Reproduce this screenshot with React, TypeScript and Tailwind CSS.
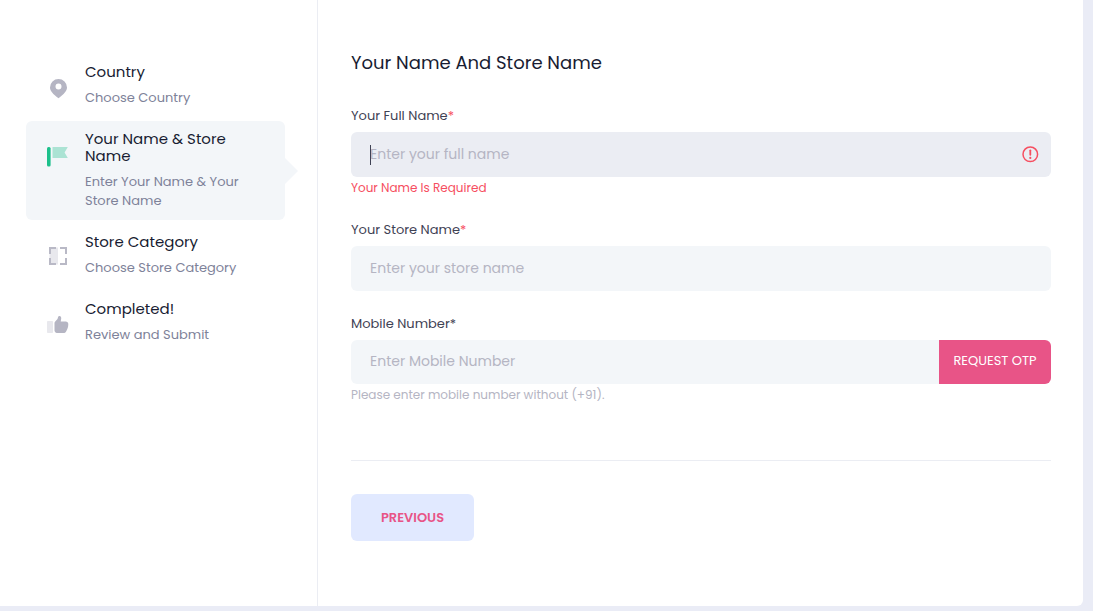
import React from 'react';
import { clsx } from 'clsx';

const PinIcon = () => (
  <svg viewBox="0 0 24 24" className="w-6 h-6 shrink-0" aria-hidden="true">
    <path
      fill="#b5b5c3"
      fillRule="evenodd"
      d="M12.5 22.2C7 18 4 14.800 4 11.400a8.500 8.500 0 0 1 17 0c0 3.400-3 6.600-8.500 10.800zM12.500 13.500a3 3 0 1 0 0-6 3 3 0 0 0 0 6z"
    />
  </svg>
);

const FlagIcon = () => (
  <svg viewBox="0 0 24 24" className="w-6 h-6 shrink-0" aria-hidden="true">
    <rect x="1" y="4" width="3.6" height="19.5" rx="1.5" fill="#1bc08b" />
    <path d="M6.500 4H21.800l-3.200 5.500 3.200 5.500H6.500z" fill="#abe3d4" />
  </svg>
);

const FrameIcon = () => (
  <svg viewBox="0 0 24 24" className="w-6 h-6 shrink-0" aria-hidden="true">
    <rect x="3.500" y="1.500" width="8.500" height="17" fill="#e8e8ed" />
    <path
      fill="none"
      stroke="#b9b9c6"
      strokeWidth="2"
      d="M4 8V2h6M14 2h6v6M20 12v6h-6M10 18H4v-6"
    />
  </svg>
);

const ThumbIcon = () => (
  <svg viewBox="0 0 24 24" className="w-6 h-6 shrink-0" aria-hidden="true">
    <rect x="1" y="8" width="6" height="12" rx="0.8" fill="#e8e8ed" />
    <path
      fill="#b5b5c3"
      d="M8.500 10c0-.6.3-1 .7-1.400L11.500 6l.6-2c.3-.7.8-1.100 1.500-.9 1.300.3 1.800 1.300 1.600 2.700L14.700 8.500h5c1.500 0 2.600 1.100 2.600 2.600 0 3-.8 5.300-2.200 7.400-.6.9-1.500 1.600-2.600 1.600h-5.500c-2 0-3.500-1-3.500-2.600z"
    />
  </svg>
);

const steps = [
  { title: 'Country', desc: 'Choose Country', icon: PinIcon },
  { title: 'Your Name & Store Name', desc: 'Enter Your Name & Your Store Name', icon: FlagIcon },
  { title: 'Store Category', desc: 'Choose Store Category', icon: FrameIcon },
  { title: 'Completed!', desc: 'Review and Submit', icon: ThumbIcon },
];

const Sidebar = ({ current }: { current: number }) => (
  <aside className="w-[318px] shrink-0 border-r border-[#ebedf3] pt-[54px] pl-[26px] pr-8">
    <ol className="flex flex-col gap-1">
      {steps.map(({ title, desc, icon: Icon }, i) => (
        <li
          key={title}
          aria-current={i === current ? 'step' : undefined}
          className={clsx(
            'relative flex gap-[15px] rounded-md pt-[9px] pb-2.5 pl-5 pr-8',
            i === current && 'bg-[#f3f6f9]'
          )}
        >
          <div className="pt-[13px]">
            <Icon />
          </div>
          <div>
            <h3 className="text-[15px] leading-[17px] text-[#181c32] mb-2">{title}</h3>
            <p className="text-[13px] leading-[19px] text-[#7e8299]">{desc}</p>
          </div>
          {i === current && (
            <svg
              viewBox="0 0 13 26"
              className="absolute left-full top-1/2 -translate-y-1/2 w-[13px] h-[26px]"
              aria-hidden="true"
            >
              <path d="M0 0l13 13L0 26z" fill="#f3f6f9" />
            </svg>
          )}
        </li>
      ))}
    </ol>
  </aside>
);

const labelClass = 'block text-[13px] leading-5 text-[#3f4254] mb-1.5';
const inputClass =
  'w-full min-w-0 h-[45px] px-[19px] pb-px text-sm text-[#3f4254] placeholder:text-[#b5b5c3] outline-none';

export default function App() {
  return (
    <div className="min-h-screen bg-[#eaecf6] pr-2.5 pb-[5px] font-[Poppins,Inter,sans-serif]">
      <div className="flex bg-white rounded-br-md">
        <Sidebar current={1} />

        <main className="flex-1 min-w-0 pt-[51px] pl-[33px] pr-8 pb-[65px]">
          <form onSubmit={(e) => e.preventDefault()}>
            <h1 className="text-lg leading-6 text-[#181c32] mb-[31px]">
              Your Name And Store Name
            </h1>

            <div className="mb-[23px]">
              <label htmlFor="fullName" className={labelClass}>
                Your Full Name<span className="text-[#f64e60]">*</span>
              </label>
              <div className="relative">
                <input
                  id="fullName"
                  type="text"
                  placeholder="Enter your full name"
                  aria-invalid="true"
                  aria-describedby="fullNameError"
                  className={clsx(inputClass, 'block rounded-md bg-[#ebedf3]')}
                />
                <span className="absolute left-[19px] top-[13px] w-px h-5 bg-[#3f4254]" />
                <svg
                  viewBox="0 0 18 18"
                  className="absolute right-3 top-[13px] w-[18px] h-[18px]"
                  aria-hidden="true"
                >
                  <circle cx="9.3" cy="9.3" r="7.3" fill="none" stroke="#f64e60" strokeWidth="1.5" />
                  <path d="M9.300 5.300v4.500" stroke="#f64e60" strokeWidth="1.8" strokeLinecap="round" />
                  <circle cx="9.3" cy="12.9" r="1.1" fill="#f64e60" />
                </svg>
              </div>
              <p id="fullNameError" className="mt-0.5 text-xs leading-[18px] text-[#f64e60]">
                Your Name Is Required
              </p>
            </div>

            <div className="mb-[23px]">
              <label htmlFor="storeName" className={labelClass}>
                Your Store Name<span className="text-[#f64e60]">*</span>
              </label>
              <input
                id="storeName"
                type="text"
                placeholder="Enter your store name"
                className={clsx(inputClass, 'block rounded-md bg-[#f3f6f9]')}
              />
            </div>

            <div>
              <label htmlFor="mobile" className={labelClass}>
                Mobile Number*
              </label>
              <div className="flex h-11">
                <input
                  id="mobile"
                  type="tel"
                  placeholder="Enter Mobile Number"
                  className={clsx(inputClass, 'flex-1 max-h-full rounded-l-md bg-[#f3f6f9]')}
                />
                <button
                  type="button"
                  className="w-28 shrink-0 rounded-r-md bg-[#e85487] pb-0.5 text-[13px] text-white whitespace-nowrap"
                >
                  REQUEST OTP
                </button>
              </div>
              <p className="mt-0.5 text-xs leading-[18px] text-[#b5b5c3]">
                Please enter mobile number without (+91).
              </p>
            </div>

            <div className="mt-14 pt-[33px] border-t border-[#ebedf3]">
              <button
                type="button"
                className="h-[47px] w-[123px] rounded-md bg-[#e1e9ff] text-[13px] font-semibold text-[#e85487]"
              >
                PREVIOUS
              </button>
            </div>
          </form>
        </main>
      </div>
    </div>
  );
}
